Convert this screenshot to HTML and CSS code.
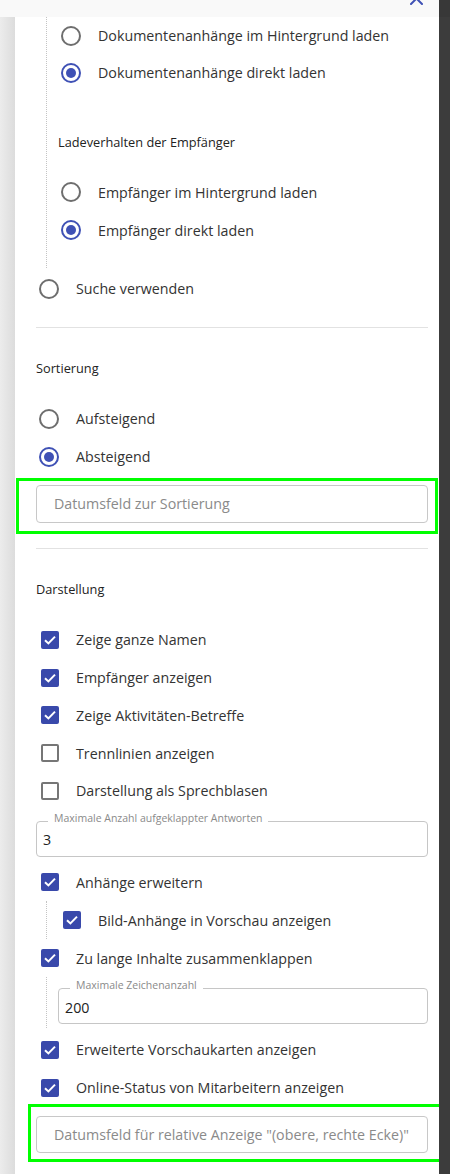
FILE: index.html
```html
<!DOCTYPE html>
<html lang="de">
<head>
<meta charset="utf-8">
<title>Einstellungen</title>
<link rel="stylesheet" href="styles.css">
</head>
<body>
<div class="screen">
  <div class="main">
    <div class="topbar">
      <svg class="close" width="13" height="13" viewBox="0 0 13 13"><path d="M1 1 L12 12 M12 1 L1 12" stroke="#3f51b5" stroke-width="2" fill="none" stroke-linecap="round"/></svg>
    </div>
    <div class="body">
      <div class="shade"></div>
      <div class="panel">
        <div class="nested nested-top">
          <div class="row r37"><span class="radio"></span><span>Dokumentenanhänge im Hintergrund laden</span></div>
          <div class="row r37"><span class="radio on"></span><span>Dokumentenanhänge direkt laden</span></div>
          <div class="sublabel">Ladeverhalten der Empfänger</div>
          <div class="row r38 first-after-label"><span class="radio"></span><span>Empfänger im Hintergrund laden</span></div>
          <div class="row r38"><span class="radio on"></span><span>Empfänger direkt laden</span></div>
        </div>
        <div class="row r38 search"><span class="radio"></span><span>Suche verwenden</span></div>
        <div class="divider d1"></div>
        <div class="section s-sort">Sortierung</div>
        <div class="row r38 after-section"><span class="radio"></span><span>Aufsteigend</span></div>
        <div class="row r38"><span class="radio on"></span><span>Absteigend</span></div>
        <div class="hl hl-sort">
          <div class="input">Datumsfeld zur Sortierung</div>
        </div>
        <div class="divider d2"></div>
        <div class="section s-view">Darstellung</div>
        <div class="row rc after-section2"><span class="check on"><svg viewBox="0 0 18 18"><path d="M4 9.2 L7.4 12.4 L14 5.6" stroke="#fff" stroke-width="2" fill="none"/></svg></span><span>Zeige ganze Namen</span></div>
        <div class="row rc"><span class="check on"><svg viewBox="0 0 18 18"><path d="M4 9.2 L7.4 12.4 L14 5.6" stroke="#fff" stroke-width="2" fill="none"/></svg></span><span>Empfänger anzeigen</span></div>
        <div class="row rc"><span class="check on"><svg viewBox="0 0 18 18"><path d="M4 9.2 L7.4 12.4 L14 5.6" stroke="#fff" stroke-width="2" fill="none"/></svg></span><span>Zeige Aktivitäten-Betreffe</span></div>
        <div class="row rc"><span class="check"></span><span>Trennlinien anzeigen</span></div>
        <div class="row rc"><span class="check"></span><span>Darstellung als Sprechblasen</span></div>
        <div class="field f-answers">
          <span class="flabel">Maximale Anzahl aufgeklappter Antworten</span>
          <span class="fvalue">3</span>
        </div>
        <div class="row rc r-attach"><span class="check on"><svg viewBox="0 0 18 18"><path d="M4 9.2 L7.4 12.4 L14 5.6" stroke="#fff" stroke-width="2" fill="none"/></svg></span><span>Anhänge erweitern</span></div>
        <div class="nested nested-img">
          <div class="row r38"><span class="check on"><svg viewBox="0 0 18 18"><path d="M4 9.2 L7.4 12.4 L14 5.6" stroke="#fff" stroke-width="2" fill="none"/></svg></span><span>Bild-Anhänge in Vorschau anzeigen</span></div>
        </div>
        <div class="row rc"><span class="check on"><svg viewBox="0 0 18 18"><path d="M4 9.2 L7.4 12.4 L14 5.6" stroke="#fff" stroke-width="2" fill="none"/></svg></span><span>Zu lange Inhalte zusammenklappen</span></div>
        <div class="nested nested-chars">
          <div class="field">
            <span class="flabel">Maximale Zeichenanzahl</span>
            <span class="fvalue">200</span>
          </div>
        </div>
        <div class="row rc r-ext"><span class="check on"><svg viewBox="0 0 18 18"><path d="M4 9.2 L7.4 12.4 L14 5.6" stroke="#fff" stroke-width="2" fill="none"/></svg></span><span>Erweiterte Vorschaukarten anzeigen</span></div>
        <div class="row rc"><span class="check on"><svg viewBox="0 0 18 18"><path d="M4 9.2 L7.4 12.4 L14 5.6" stroke="#fff" stroke-width="2" fill="none"/></svg></span><span>Online-Status von Mitarbeitern anzeigen</span></div>
        <div class="hl hl-rel">
          <div class="input input-rel">Datumsfeld für relative Anzeige "(obere, rechte Ecke)"</div>
        </div>
      </div>
    </div>
  </div>
  <div class="dark"><div class="dark-top"></div></div>
</div>
</body>
</html>
```

FILE: styles.css
```css
* { box-sizing: border-box; }
html, body { margin: 0; padding: 0; }
body {
  width: 450px;
  height: 1174px;
  overflow: hidden;
  font-family: "Open Sans", "Noto Sans", sans-serif;
  font-size: 14.25px;
  color: #333;
  background: #3c3c3c;
}
.screen { display: flex; width: 450px; height: 1174px; }
.main {
  width: 439px;
  height: 1174px;
  display: flex;
  flex-direction: column;
  overflow: hidden;
}
.topbar {
  height: 17px;
  flex: none;
  background: #f9f9f9;
  display: flex;
  justify-content: flex-end;
  padding-right: 16px;
  overflow: hidden;
}
.close { margin-top: -8px; flex: none; }
.body { flex: 1; display: flex; min-height: 0; }
.shade {
  width: 15px;
  flex: none;
  background: linear-gradient(to right, #ececec, #dcdcdc);
}
.panel {
  flex: 1;
  background: #fff;
  padding: 0 11px 0 21px;
  overflow: hidden;
}
.dark { width: 11px; flex: none; background: #3c3c3c; }
.dark-top { height: 17px; background: #383838; }

.row { display: flex; align-items: center; gap: 17px; white-space: nowrap; }
.r37 { height: 37px; }
.r38 { height: 38px; }
.rc { height: 37.75px; }

.radio {
  width: 20px; height: 20px;
  margin-left: 3px;
  border: 2px solid #6e6e6e;
  border-radius: 50%;
  flex: none;
  display: flex;
  align-items: center;
  justify-content: center;
}
.radio.on { border-color: #3f51b5; }
.radio.on::after {
  content: "";
  width: 10px; height: 10px;
  border-radius: 50%;
  background: #3f51b5;
}
.check {
  width: 18px; height: 18px;
  margin-left: 5px;
  border: 2px solid #767676;
  border-radius: 2px;
  flex: none;
  display: flex;
}
.check.on { border: none; background: #3949ab; }
.check svg { width: 18px; height: 18px; }
.nested .check { margin-left: 5px; }

.nested {
  margin-left: 10px;
  border-left: 1px dotted #c4c4c4;
  padding-left: 11px;
}
.nested-top { padding-bottom: 18.5px; }
.sublabel {
  margin-top: 40.7px;
  height: 20px;
  line-height: 20px;
  font-size: 12.75px;
  color: #222;
}
.first-after-label { margin-top: 21.8px; }
.search { margin-top: 2px; }

.divider { height: 1px; background: #e2e2e2; }
.d1 { margin-top: 19px; }
.d2 { margin-top: 25px; }
.section {
  height: 20px;
  line-height: 20px;
  font-size: 12.75px;
  color: #222;
}
.s-sort { margin-top: 29.7px; }
.s-view { margin-top: 30px; }
.after-section { margin-top: 22.3px; }
.after-section2 { margin-top: 22.1px; }

.hl { position: relative; }
.hl::after {
  content: "";
  position: absolute;
  border: 3px solid #00ff00;
  pointer-events: none;
}
.hl-sort { margin-top: 9px; }
.hl-sort::after { top: -7px; bottom: -11px; left: -20px; right: -10px; }
.hl-rel { margin-top: 9.3px; }
.hl-rel::after { top: -12px; bottom: -9px; left: -8px; right: -20px; }

.input {
  height: 38px;
  border: 1px solid #c8c8c8;
  border-radius: 4px;
  padding-left: 17px;
  display: flex;
  align-items: center;
  color: #8a8a8a;
  white-space: nowrap;
}
.input-rel { height: 37px; }

.field {
  position: relative;
  height: 36px;
  border: 1px solid #c6c6c6;
  border-radius: 4px;
  display: flex;
  align-items: center;
  padding-left: 6px;
  color: #222;
}
.f-answers { margin-top: 11.1px; }
.flabel {
  position: absolute;
  top: -10px;
  left: 11px;
  padding: 0 6px;
  background: #fff;
  font-size: 10.5px;
  line-height: 12px;
  color: #8a8a8a;
  white-space: nowrap;
}
.fvalue { margin-top: 2px; }
.r-attach { margin-top: 6.6px; }
.nested-chars { padding-top: 11px; padding-bottom: 4px; }
.r-ext { margin-top: 3px; }
```
